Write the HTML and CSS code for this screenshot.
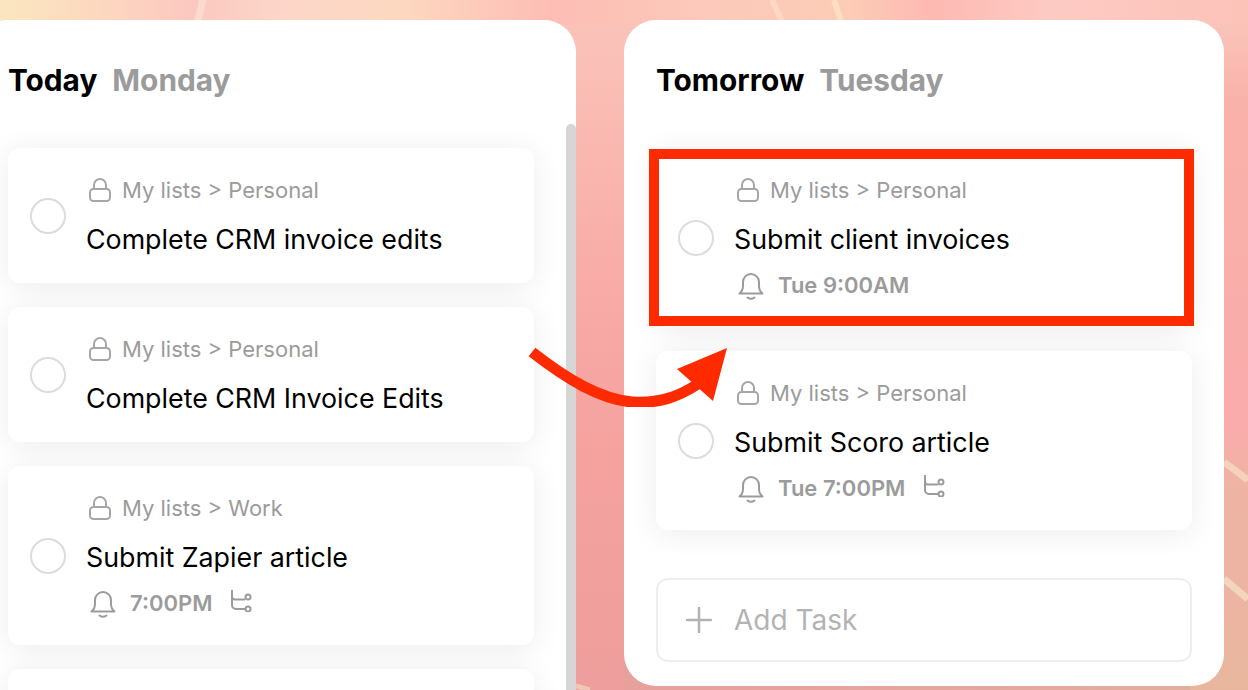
FILE: index.html
```html
<!DOCTYPE html>
<html lang="en">
<head>
    <meta charset="UTF-8">
    <meta name="viewport" content="width=device-width, initial-scale=1.0">
    <title>Tasks</title>
    <link rel="stylesheet" href="styles.css">
</head>
<body>
    <svg width="0" height="0" class="defs">
        <symbol id="i-lock" viewBox="0 0 22 24">
            <path d="M5 11V7a6 6 0 0 1 12 0v4" fill="none" stroke="currentColor" stroke-width="2"/>
            <rect x="1" y="11" width="20" height="12" rx="3.5" fill="none" stroke="currentColor" stroke-width="2"/>
        </symbol>
        <symbol id="i-bell" viewBox="0 0 26 28">
            <path d="M1.500 21.500c2.500-2 3.500-4 3.500-7.500V10a8 8 0 0 1 16 0v4c0 3.500 1 5.500 3.500 7.500z" fill="none" stroke="currentColor" stroke-width="2" stroke-linejoin="round"/>
            <path d="M9.500 25.500c2 1.500 5 1.500 7 0" fill="none" stroke="currentColor" stroke-width="2" stroke-linecap="round"/>
        </symbol>
        <symbol id="i-sub" viewBox="0 0 22 22">
            <path d="M2 0v15a4 4 0 0 0 4 4h9M2 6.500a3 3 0 0 0 3 3h10" fill="none" stroke="currentColor" stroke-width="2"/>
            <circle cx="18" cy="7" r="2.500" fill="none" stroke="currentColor" stroke-width="2"/>
            <circle cx="18" cy="19" r="2.500" fill="none" stroke="currentColor" stroke-width="2"/>
        </symbol>
    </svg>

    <!-- wallpaper streaks -->
    <svg class="streaks" viewBox="0 0 1248 690" width="1248" height="690">
        <path d="M203 0L197 24" stroke="#fde6d8" stroke-width="7" stroke-opacity="0.6" fill="none"/>
        <path d="M772 0L783 24" stroke="#fde3cf" stroke-width="6" stroke-opacity="0.6" fill="none"/>
        <path d="M834 0L842 24" stroke="#fde6c9" stroke-width="6" stroke-opacity="0.7" fill="none"/>
        <path d="M1224 462L1248 480" stroke="#f6dcc4" stroke-width="7" stroke-opacity="0.75" fill="none"/>
        <path d="M1224 579L1248 599" stroke="#f4dfc8" stroke-width="7" stroke-opacity="0.75" fill="none"/>
        <path d="M576 686L590 690" stroke="#f3d6c0" stroke-width="5" stroke-opacity="0.7" fill="none"/>
    </svg>

    <div class="board">
        <section class="panel panel-scroll">
            <div class="panel-header"><span class="day">Today</span><span class="weekday">Monday</span></div>
            <div class="scrollbar"></div>
            <div class="task-list">
                <div class="task">
                    <div class="check"></div>
                    <div class="task-body">
                        <div class="task-path"><svg class="icon-lock"><use href="#i-lock"/></svg>My lists &gt; Personal</div>
                        <div class="task-title">Complete CRM invoice edits</div>
                    </div>
                </div>
                <div class="task">
                    <div class="check"></div>
                    <div class="task-body">
                        <div class="task-path"><svg class="icon-lock"><use href="#i-lock"/></svg>My lists &gt; Personal</div>
                        <div class="task-title">Complete CRM Invoice Edits</div>
                    </div>
                </div>
                <div class="task">
                    <div class="check"></div>
                    <div class="task-body">
                        <div class="task-path"><svg class="icon-lock"><use href="#i-lock"/></svg>My lists &gt; Work</div>
                        <div class="task-title">Submit Zapier article</div>
                        <div class="task-meta"><svg class="icon-bell"><use href="#i-bell"/></svg>7:00PM<svg class="icon-sub"><use href="#i-sub"/></svg></div>
                    </div>
                </div>
                <div class="task task-empty"></div>
            </div>
        </section>

        <section class="panel">
            <div class="panel-header"><span class="day">Tomorrow</span><span class="weekday">Tuesday</span></div>
            <div class="task-list">
                <div class="task">
                    <div class="check"></div>
                    <div class="task-body">
                        <div class="task-path"><svg class="icon-lock"><use href="#i-lock"/></svg>My lists &gt; Personal</div>
                        <div class="task-title">Submit client invoices</div>
                        <div class="task-meta"><svg class="icon-bell"><use href="#i-bell"/></svg>Tue 9:00AM</div>
                    </div>
                    <div class="highlight"></div>
                </div>
                <div class="task">
                    <div class="check"></div>
                    <div class="task-body">
                        <div class="task-path"><svg class="icon-lock"><use href="#i-lock"/></svg>My lists &gt; Personal</div>
                        <div class="task-title">Submit Scoro article</div>
                        <div class="task-meta"><svg class="icon-bell"><use href="#i-bell"/></svg>Tue 7:00PM<svg class="icon-sub"><use href="#i-sub"/></svg></div>
                    </div>
                </div>
            </div>
            <div class="add-task">
                <svg class="icon-plus" viewBox="0 0 26 26"><path d="M13 1v24M1 13h24" fill="none" stroke="currentColor" stroke-width="2.500" stroke-linecap="round"/></svg>
                Add Task
            </div>
        </section>

        <svg class="arrow" viewBox="0 0 200 60" width="200" height="60">
            <path d="M4 5C40 33 72 52 104 55C130 57 150 50 170 37" fill="none" stroke="#ff2a00" stroke-width="11"/>
            <polygon points="199,1 149,22 185,54" fill="#ff2a00"/>
        </svg>
    </div>
</body>
</html>
```

FILE: styles.css
```css
html, body {
    margin: 0;
    height: 100%;
    overflow: hidden;
}

body {
    font-family: Inter, "Liberation Sans", sans-serif;
    color: #000;
    background:
        linear-gradient(90deg, #fbe6c0 0, #fcd6bf 110px, #fbc8bf 190px, #fdd6c9 280px, #fdd8c0 400px, #fdbdb4 550px, #fcc9ba 700px, #fcccb6 850px, #fdb9b2 930px, #fdcac3 1050px, #fcc3b9 1248px) 0 0 / 100% 24px no-repeat,
        linear-gradient(180deg, #fac4ba 24px, #f9b2aa 100px, #f9abab 430px, #efb4a4 480px, #ecb4a2 600px, #e8b69d 690px) 1190px 0 / 58px 100% no-repeat,
        linear-gradient(90deg, #e8a09c 0, #e4a89f 400px, #e2b09c 620px) 624px 650px / 600px 40px no-repeat,
        linear-gradient(180deg, #fac3b9 24px, #f8aaa6 300px, #f5a29f 450px, #ee9e9c 690px);
}

.defs {
    position: absolute;
}

.streaks {
    position: absolute;
    top: 0;
    left: 0;
}

.board {
    position: relative;
    display: flex;
    align-items: flex-start;
    gap: 48px;
    margin-left: -24px;
    padding-top: 20px;
    width: 1248px;
}

.panel {
    position: relative;
    display: flex;
    flex-direction: column;
    width: 600px;
    height: 666px;
    flex: none;
    background-color: #fff;
    border-radius: 32px;
    overflow: hidden;
}

/* the left column runs on past the bottom of the window */
.panel-scroll {
    height: 670px;
    border-radius: 32px 32px 0 0;
}

.panel-header {
    display: flex;
    align-items: center;
    gap: 15px;
    height: 104px;
    padding: 16px 32px 0;
    font-size: 29.8px;
    font-weight: 700;
    flex: none;
    box-sizing: border-box;
}

.weekday {
    color: #9b9b9b;
}

.scrollbar {
    position: absolute;
    top: 104px;
    right: 0;
    bottom: 0;
    width: 10px;
    background-color: #d6d6d6;
    border-radius: 5px 5px 0 0;
}

.task-list {
    display: flex;
    flex-direction: column;
    gap: 24px;
    height: 430px;
    padding: 24px 32px 0;
    box-sizing: border-box;
    overflow: hidden;
    flex: none;
}

.panel-scroll .task-list {
    height: 566px;
    padding-right: 42px;
}

.task {
    position: relative;
    display: flex;
    align-items: center;
    gap: 20px;
    padding: 26px 22px;
    background-color: #fff;
    border-radius: 12px;
    box-shadow: 0 4px 30px rgba(0, 0, 0, 0.08);
    flex: none;
}

.task-empty {
    height: 135px;
    box-sizing: border-box;
}

.check {
    width: 36px;
    height: 36px;
    border: 2px solid #dcdcdc;
    border-radius: 50%;
    box-sizing: border-box;
    flex: none;
}

.task-path {
    display: flex;
    align-items: center;
    height: 32px;
    font-size: 22px;
    color: #9b9b9b;
}

.task-title {
    margin-top: 16px;
    font-size: 26.8px;
    line-height: 35px;
}

.task-meta {
    display: flex;
    align-items: center;
    height: 32px;
    margin-top: 12px;
    font-size: 22px;
    font-weight: 600;
    color: #9b9b9b;
}

.icon-lock {
    width: 22px;
    height: 24px;
    margin: 0 11px 0 3px;
    color: #a6a6a6;
}

.icon-bell {
    width: 26px;
    height: 28px;
    margin: 2px 14px 0 4px;
    color: #9b9b9b;
}

.icon-sub {
    width: 22px;
    height: 22px;
    margin: -4px 0 0 18px;
    color: #9b9b9b;
}

.highlight {
    position: absolute;
    top: 1px;
    left: -7px;
    right: -2px;
    height: 177px;
    border: 10px solid #ff2a00;
    box-sizing: border-box;
}

.add-task {
    display: flex;
    align-items: center;
    gap: 22px;
    height: 84px;
    margin: 24px 32px 0;
    padding-left: 28px;
    border: 2px solid #eee;
    border-radius: 12px;
    box-sizing: border-box;
    font-size: 28px;
    color: #b3b3b3;
}

.icon-plus {
    width: 26px;
    height: 26px;
}

.arrow {
    position: absolute;
    top: 347px;
    left: 552px;
}
```
